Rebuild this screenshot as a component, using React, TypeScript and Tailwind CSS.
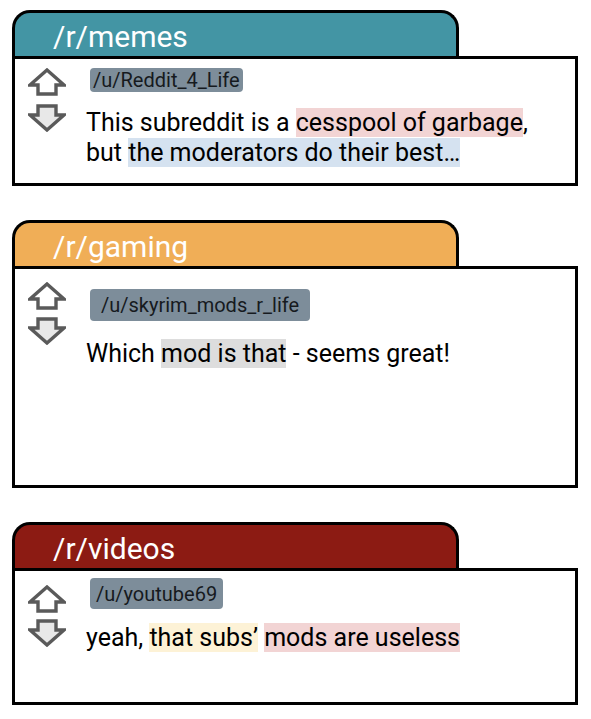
import React from "react";

type Part = { text: string; hl?: string };

const posts: {
  sub: string;
  tab: string;
  user: string;
  badge: string;
  body: string;
  arrows: string;
  text: string;
  gap: string;
  lines: Part[];
}[] = [
  {
    sub: "/r/memes",
    tab: "bg-[#4395a4]",
    user: "/u/Reddit_4_Life",
    badge: "h-[24px] px-[3px]",
    body: "h-[130px]",
    arrows: "gap-[8px] pt-[9px]",
    text: "pt-[9px]",
    gap: "mt-[16px]",
    lines: [
      { text: "This subreddit is a " },
      { text: "cesspool of garbage", hl: "bg-[#f2d4d4]" },
      { text: ",\nbut " },
      { text: "the moderators do their best…", hl: "bg-[#d5e2f0]" },
    ],
  },
  {
    sub: "/r/gaming",
    tab: "bg-[#f0ae57]",
    user: "/u/skyrim_mods_r_life",
    badge: "h-[32px] px-[11px]",
    body: "h-[222px]",
    arrows: "gap-[7px] pt-[13px]",
    text: "pt-[20px]",
    gap: "mt-[18px]",
    lines: [
      { text: "Which " },
      { text: "mod is that", hl: "bg-[#dddddd]" },
      { text: " - seems great!" },
    ],
  },
  {
    sub: "/r/videos",
    tab: "bg-[#8c1b13]",
    user: "/u/youtube69",
    badge: "h-[31px] px-[6px]",
    body: "h-[137px]",
    arrows: "gap-[6px] pt-[14px]",
    text: "pt-[7px]",
    gap: "mt-[14px]",
    lines: [
      { text: "yeah, " },
      { text: "that subs’", hl: "bg-[#fdf2d6]" },
      { text: " " },
      { text: "mods are useless", hl: "bg-[#f2d4d4]" },
    ],
  },
];

function Arrow({ down }: { down?: boolean }) {
  return (
    <svg width="38" height="28" viewBox="0 0 38 28" className="block">
      <path
        d={
          down
            ? "M19 26 L36 11 L28 11 L28 2 L10 2 L10 11 L2 11 Z"
            : "M19 2 L36 17 L28 17 L28 26 L10 26 L10 17 L2 17 Z"
        }
        fill={down ? "#e8e8e8" : "#ffffff"}
        stroke="#5a5a5a"
        strokeWidth="3.4"
        strokeLinejoin="miter"
      />
    </svg>
  );
}

export default function App() {
  return (
    <div className="bg-white min-h-screen pl-[12px] pt-[10px] flex flex-col gap-[34px] font-['Roboto',sans-serif]">
      {posts.map((post) => (
        <div key={post.sub} className="w-[566px]">
          <div
            className={`${post.tab} w-[447px] h-[46px] rounded-t-[18px] border-[3px] border-b-0 border-black pl-[38px] pt-[5px] text-[30px] leading-[38px] text-white`}
          >
            {post.sub}
          </div>
          <div
            className={`${post.body} border-[3px] border-black bg-white flex pl-[13px]`}
          >
            <div className={`flex flex-col ${post.arrows}`}>
              <Arrow />
              <Arrow down />
            </div>
            <div className={`ml-[20px] flex flex-col items-start ${post.text}`}>
              <span
                className={`${post.badge} ml-[4px] text-[20px] bg-[#7d8d9a] rounded-[4px] text-[#161a1e] flex items-center`}
              >
                {post.user}
              </span>
              <p
                className={`${post.gap} text-[25px] leading-[30px] text-black whitespace-pre-line`}
              >
                {post.lines.map((part, i) => (
                  <span key={i} className={part.hl}>
                    {part.text}
                  </span>
                ))}
              </p>
            </div>
          </div>
        </div>
      ))}
    </div>
  );
}
